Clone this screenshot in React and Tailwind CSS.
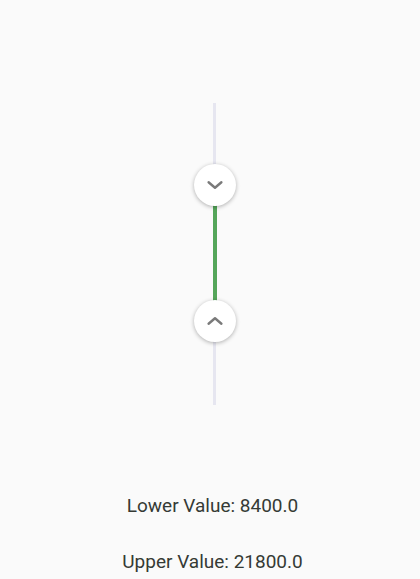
export default function App() {
  const lower = 8400.0;
  const upper = 21800.0;

  const Thumb = ({ up, top }) => (
    <div
      className="absolute left-1/2 -translate-x-1/2 w-[42px] h-[42px] rounded-full bg-white flex items-center justify-center shadow-[0_1px_4px_rgba(0,0,0,0.3)]"
      style={{ top }}
    >
      <svg width="22" height="22" viewBox="0 0 24 24" fill="none" stroke="#7a7a7a" strokeWidth="2.6" strokeLinecap="round" strokeLinejoin="round">
        {up ? <path d="M5 15l7-6 7 6" /> : <path d="M5 9l7 6 7-6" />}
      </svg>
    </div>
  );

  return (
    <div className="w-[420px] h-[579px] bg-[#fafafa] overflow-hidden flex flex-col items-center pt-[103px] font-['Roboto','Liberation_Sans',sans-serif]">
      {/* vertical range slider */}
      <div className="relative w-[42px] h-[302px] ml-[9px]">
        <div className="absolute left-[19.5px] top-0 w-[3px] h-full bg-[#e6e6f0]" />
        <div className="absolute left-[19px] top-[82px] w-[4px] h-[136px] bg-[#55a65a]" />
        <Thumb up={false} top={61} />
        <Thumb up={true} top={197} />
      </div>

      <div className="mt-[89px] ml-[5px] text-[19px] leading-[24px] text-[#353a35]">
        Lower Value: {lower.toFixed(1)}
      </div>
      <div className="mt-[32px] ml-[5px] text-[19px] leading-[24px] text-[#353a35]">
        Upper Value: {upper.toFixed(1)}
      </div>
    </div>
  );
}
